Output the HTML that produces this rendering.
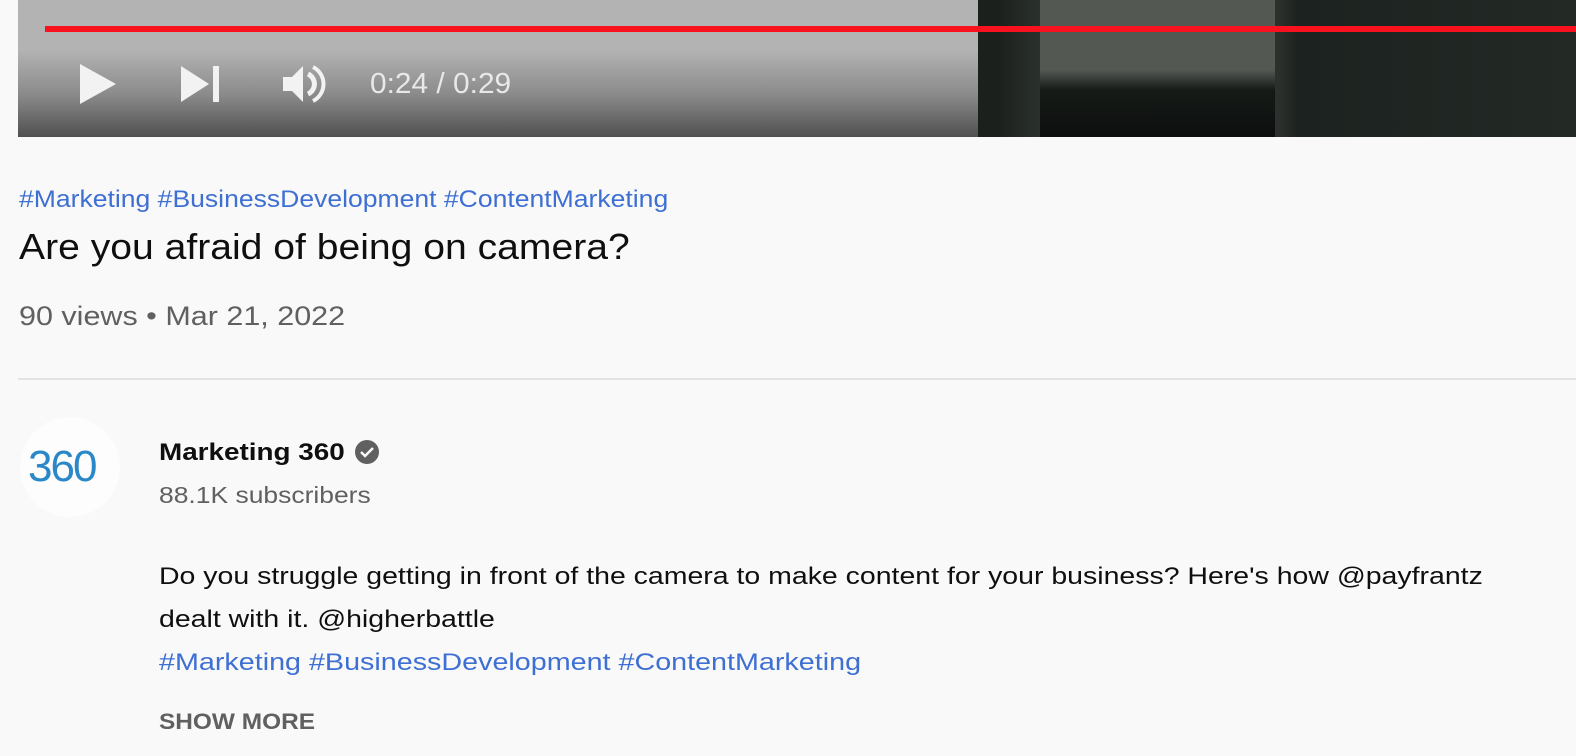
<!DOCTYPE html>
<html><head><meta charset="utf-8"><style>
body{margin:0;width:1576px;height:756px;background:#f9f9f9;font-family:"Liberation Sans",Arial,sans-serif;overflow:hidden;position:relative}
.vid{position:absolute;left:18px;top:0;width:1558px;height:137px;background:linear-gradient(#b3b3b3 0,#b3b3b3 50px,#8a8a8a 95px,#505050 137px);overflow:hidden}
.dark{position:absolute;left:960px;top:0;right:0;bottom:0;background:linear-gradient(90deg,#1c201d 0,#1c201d 20px,#2a302c 60px,#2c312d 300px,#1c221f 320px,#232a26 100%)}
.panel{position:absolute;left:62px;top:0;width:235px;height:137px;background:linear-gradient(#535853 0,#535853 70px,#161a17 90px,#0c0f0d 137px)}
.bar{position:absolute;left:27px;top:26px;right:0;height:6px;background:#f8121e}
.t{position:absolute;white-space:nowrap;transform-origin:0 0}
.blue{color:#3e6fd3}
</style></head><body>
<div class="vid"><div class="dark"><div class="panel"></div></div><div class="bar"></div>
<svg style="position:absolute;left:62px;top:62px" width="40" height="46"><polygon points="0,2 36,22 0,42" fill="#f2f2f2"/></svg>
<svg style="position:absolute;left:163px;top:66px" width="42" height="38"><polygon points="0,0 28,18 0,36" fill="#f2f2f2"/><rect x="32" y="0" width="6" height="36" fill="#f2f2f2"/></svg>
<svg style="position:absolute;left:265px;top:64px" width="46" height="42"><polygon points="0,13 9,13 20,2 20,38 9,27 0,27" fill="#f2f2f2"/><path d="M25 10 A11 11 0 0 1 25 30" stroke="#f2f2f2" stroke-width="5" fill="none"/><path d="M30 3 A19 19 0 0 1 30 37" stroke="#f2f2f2" stroke-width="4" fill="none"/></svg>
<div class="t" style="left:352px;top:68px;font-size:29px;color:#e8e8e8;transform:scaleX(1.03)">0:24 / 0:29</div>
</div>
<div class="t blue" style="left:19px;top:186px;font-size:24px;transform:scaleX(1.106)">#Marketing #BusinessDevelopment #ContentMarketing</div>
<div class="t" style="left:19px;top:226px;font-size:36px;color:#0f0f0f;transform:scaleX(1.086)">Are you afraid of being on camera?</div>
<div class="t" style="left:19px;top:301px;font-size:27px;color:#606060;transform:scaleX(1.13)">90 views • Mar 21, 2022</div>
<div style="position:absolute;left:18px;right:0;top:378px;height:2px;background:#e3e3e3"></div>
<div style="position:absolute;left:20px;top:417px;width:100px;height:100px;border-radius:50%;background:#fdfdfd"></div>
<div class="t" style="left:28px;top:442px;font-size:44px;color:#2a87c8;letter-spacing:-2px">360</div>
<div class="t" style="left:159px;top:439px;font-size:24px;font-weight:bold;color:#0f0f0f;transform:scaleX(1.16)">Marketing 360</div>
<svg style="position:absolute;left:354px;top:439px" width="26" height="26"><circle cx="13" cy="13" r="12" fill="#606060"/><path d="M7 13 l4 4 l8 -8" stroke="#f9f9f9" stroke-width="2.5" fill="none"/></svg>
<div class="t" style="left:159px;top:482px;font-size:23px;color:#606060;transform:scaleX(1.15)">88.1K subscribers</div>
<div class="t" style="left:159px;top:563px;font-size:24px;color:#0f0f0f;transform:scaleX(1.186)">Do you struggle getting in front of the camera to make content for your business? Here's how @payfrantz</div>
<div class="t" style="left:159px;top:606px;font-size:24px;color:#0f0f0f;transform:scaleX(1.186)">dealt with it. @higherbattle</div>
<div class="t blue" style="left:159px;top:649px;font-size:24px;transform:scaleX(1.196)">#Marketing #BusinessDevelopment #ContentMarketing</div>
<div class="t" style="left:159px;top:709px;font-size:22px;font-weight:bold;color:#606060;transform:scaleX(1.11)">SHOW MORE</div>
</body></html>
